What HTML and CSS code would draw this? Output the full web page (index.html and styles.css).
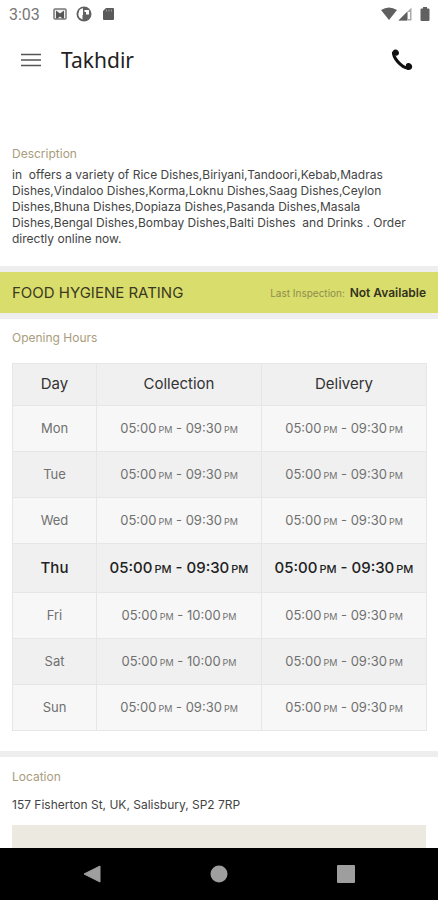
FILE: index.html
```html
<!DOCTYPE html>
<html lang="en">
<head>
    <meta charset="UTF-8">
    <meta name="viewport" content="width=device-width, initial-scale=1.0">
    <title>Takhdir</title>
    <link rel="stylesheet" href="styles.css">
</head>
<body>
    <div class="status-bar">
        <span class="clock">3:03</span>
        <svg class="status-icon" width="14" height="14" viewBox="0 0 14 14" aria-hidden="true">
            <rect x="1" y="2" width="12" height="10" rx="1" fill="#eee" stroke="#777" stroke-width="1.5"/>
            <path d="M3 3.500l4 3 4-3v8H9.500L7 9.500l-2.500 2H3z" fill="#555"/>
        </svg>
        <svg class="status-icon" width="16" height="16" viewBox="0 0 16 16" aria-hidden="true">
            <circle cx="8" cy="8" r="7.500" fill="#616161"/>
            <path d="M3.500 4Q5 2.300 7 2.200V9h-.5v4.500Q2.500 12 2.300 8z" fill="#fff"/>
            <path d="M8.500 4H13v4.500H10V6H8.500z" fill="#fff"/>
        </svg>
        <svg class="status-icon" width="14" height="14" viewBox="0 0 14 14" aria-hidden="true">
            <path d="M5 1h7a1 1 0 0 1 1 1v10a1 1 0 0 1-1 1H3a1 1 0 0 1-1-1V4z" fill="#5a5a5a"/>
            <path d="M5.500 2.500v2M8 2.500v2M10.500 2.500v2" stroke="#999"/>
        </svg>
        <div class="signals">
            <svg width="18" height="14" viewBox="0 0 18 14" aria-hidden="true">
                <path d="M1 3Q9-2 17 3L9 13z" fill="#606060"/>
            </svg>
            <svg width="14" height="14" viewBox="0 0 14 14" aria-hidden="true">
                <path d="M13.500.500v13H.500z" fill="#aaa"/>
                <path d="M9 5v8.500H.500z" fill="#606060"/>
                <path d="M10 5h2v7h-2z" fill="#fff"/>
            </svg>
            <svg class="battery" width="10" height="14" viewBox="0 0 10 14" aria-hidden="true">
                <path d="M3 0h4v1.500h1.500a1 1 0 0 1 1 1V13a1 1 0 0 1-1 1h-7a1 1 0 0 1-1-1V2.500a1 1 0 0 1 1-1H3z" fill="#606060"/>
            </svg>
        </div>
    </div>

    <header>
        <button aria-label="Open menu">
            <svg width="22" height="22" viewBox="0 0 22 22" aria-hidden="true">
                <path d="M1 5.500h20M1 11h20M1 16.500h20" stroke="#555" stroke-width="1.600"/>
            </svg>
        </button>
        <h1>Takhdir</h1>
        <button aria-label="Call restaurant">
            <svg width="22" height="22" viewBox="0 0 22 22" aria-hidden="true">
                <path d="M2.500 3C2 8.500 9.500 18 17.500 19.500" fill="none" stroke="#111" stroke-width="3.200"/>
                <path d="M4 .600C6.500.400 8.200 2.500 8 4.300 7.800 6.200 6 7 4.500 6.500L1.200 5C1.300 2.700 2.200.900 4 .600zM21.200 17.500c-.2-2.300-2.300-3.800-4.200-3.500-1.900.3-2.500 2-2 3.500l1.600 3.400c2.500.5 4.800-1 4.600-3.400z" fill="#111"/>
            </svg>
        </button>
    </header>

    <main>
        <section class="description">
            <h2>Description</h2>
            <p>in &nbsp;offers a variety of Rice Dishes,Biriyani,Tandoori,Kebab,Madras Dishes,Vindaloo Dishes,Korma,Loknu Dishes,Saag Dishes,Ceylon Dishes,Bhuna Dishes,Dopiaza Dishes,Pasanda Dishes,Masala Dishes,Bengal Dishes,Bombay Dishes,Balti Dishes &nbsp;and Drinks . Order directly online now.</p>
        </section>

        <section class="hygiene">
            <h3>FOOD HYGIENE RATING</h3>
            <span class="inspection">Last Inspection: <strong>Not Available</strong></span>
        </section>

        <section class="hours">
            <h2>Opening Hours</h2>
            <table>
                <thead>
                    <tr><th class="day">Day</th><th>Collection</th><th>Delivery</th></tr>
                </thead>
                <tbody>
                    <tr><td>Mon</td><td>05:00<small>PM</small> - 09:30<small>PM</small></td><td>05:00<small>PM</small> - 09:30<small>PM</small></td></tr>
                    <tr><td>Tue</td><td>05:00<small>PM</small> - 09:30<small>PM</small></td><td>05:00<small>PM</small> - 09:30<small>PM</small></td></tr>
                    <tr><td>Wed</td><td>05:00<small>PM</small> - 09:30<small>PM</small></td><td>05:00<small>PM</small> - 09:30<small>PM</small></td></tr>
                    <tr class="today"><td>Thu</td><td>05:00<small>PM</small> - 09:30<small>PM</small></td><td>05:00<small>PM</small> - 09:30<small>PM</small></td></tr>
                    <tr><td>Fri</td><td>05:00<small>PM</small> - 10:00<small>PM</small></td><td>05:00<small>PM</small> - 09:30<small>PM</small></td></tr>
                    <tr><td>Sat</td><td>05:00<small>PM</small> - 10:00<small>PM</small></td><td>05:00<small>PM</small> - 09:30<small>PM</small></td></tr>
                    <tr><td>Sun</td><td>05:00<small>PM</small> - 09:30<small>PM</small></td><td>05:00<small>PM</small> - 09:30<small>PM</small></td></tr>
                </tbody>
            </table>
        </section>

        <section class="location">
            <h2>Location</h2>
            <address>157 Fisherton St, UK, Salisbury, SP2 7RP</address>
            <div class="map"></div>
        </section>
    </main>

    <nav>
        <button aria-label="Back">
            <svg width="18" height="18" viewBox="0 0 18 18" aria-hidden="true"><path d="M17 1v16L1 9z" fill="#9e9e9e" stroke="#9e9e9e" stroke-linejoin="round"/></svg>
        </button>
        <button aria-label="Home">
            <svg width="18" height="18" viewBox="0 0 18 18" aria-hidden="true"><circle cx="9" cy="9" r="8.500" fill="#9e9e9e"/></svg>
        </button>
        <button aria-label="Recent apps">
            <svg width="18" height="18" viewBox="0 0 18 18" aria-hidden="true"><rect width="18" height="18" rx="1" fill="#9e9e9e"/></svg>
        </button>
    </nav>
</body>
</html>
```
FILE: styles.css
```css
:root {
    --text-color: #444444;
    --label-color: #a99c7c;
    --divider-color: #eeeeee;
    --rating-color: #d9dd6b;
    --line-color: #e6e6e6;
}

* {
    box-sizing: border-box;
}

body {
    font-family: Inter, 'Open Sans', sans-serif;
    font-size: 12px;
    color: var(--text-color);
    background-color: #FFFFFF;
    margin: 0;
    display: flex;
    flex-direction: column;
    height: 100vh;
}

h1, h2, h3, p {
    margin: 0;
    font-weight: 400;
}

button {
    background: none;
    border: none;
    padding: 0;
    display: flex;
    cursor: pointer;
}

.status-bar {
    display: flex;
    align-items: center;
    height: 28px;
    padding: 0 8px 0 9px;
    flex-shrink: 0;
}

.clock {
    font-family: Roboto, sans-serif;
    font-size: 16px;
    color: #777777;
    margin-right: 4px;
}

.status-icon {
    margin-left: 9px;
}

.signals {
    display: flex;
    align-items: center;
    margin-left: auto;
}

.battery {
    margin-left: 8px;
}

header {
    display: flex;
    align-items: center;
    height: 64px;
    padding: 0 25px 0 20px;
    flex-shrink: 0;
}

header h1 {
    flex: 1;
    margin-left: 19px;
    font-family: 'Noto Sans', sans-serif;
    font-size: 21px;
    color: #222222;
}

main {
    flex: 1;
    min-height: 0;
    overflow: hidden;
}

h2 {
    font-size: 12px;
    line-height: 16px;
    color: var(--label-color);
}

.description {
    padding: 54px 12px 19px;
}

.description p {
    margin-top: 5px;
    line-height: 16px;
}

.hygiene {
    display: flex;
    justify-content: space-between;
    align-items: center;
    height: 53px;
    padding: 0 12px;
    background-color: var(--rating-color);
    border-top: 6px solid var(--divider-color);
    border-bottom: 6px solid var(--divider-color);
}

.hygiene h3 {
    font-size: 15px;
    color: #3a3a22;
}

.inspection {
    font-size: 10px;
    color: #8c8e50;
}

.inspection strong {
    font-size: 12px;
    font-weight: 600;
    color: #333322;
    margin-left: 2px;
}

.hours {
    padding: 11px 11px 20px 12px;
}

table {
    width: 100%;
    margin-top: 17px;
    border: 1px solid var(--line-color);
    border-collapse: collapse;
    table-layout: fixed;
    text-align: center;
}

thead tr, tbody tr:nth-child(even) {
    background-color: #f0f0f0;
}

tbody tr {
    background-color: #f7f7f7;
}

th, td {
    height: 46px;
    padding: 0 0 2px;
    border: 1px solid var(--line-color);
    white-space: nowrap;
}

th {
    height: 42px;
    font-size: 15px;
    font-weight: 400;
    color: #333333;
}

td {
    font-size: 13px;
    color: #707070;
}

.day {
    width: 84px;
}

small {
    font-size: 9px;
    margin-left: 2px;
}

.today td {
    height: 49px;
    font-size: 15px;
    font-weight: 500;
    color: #222222;
}

.today small {
    font-size: 11px;
}

.location {
    padding: 12px 12px 0;
    border-top: 6px solid var(--divider-color);
}

address {
    margin-top: 12px;
    font-style: normal;
    line-height: 16px;
}

.map {
    height: 180px;
    margin-top: 12px;
    background-color: #ebe9e0;
}

nav {
    display: flex;
    justify-content: space-between;
    align-items: center;
    height: 52px;
    padding: 0 19%;
    background-color: #000000;
    flex-shrink: 0;
}
```
